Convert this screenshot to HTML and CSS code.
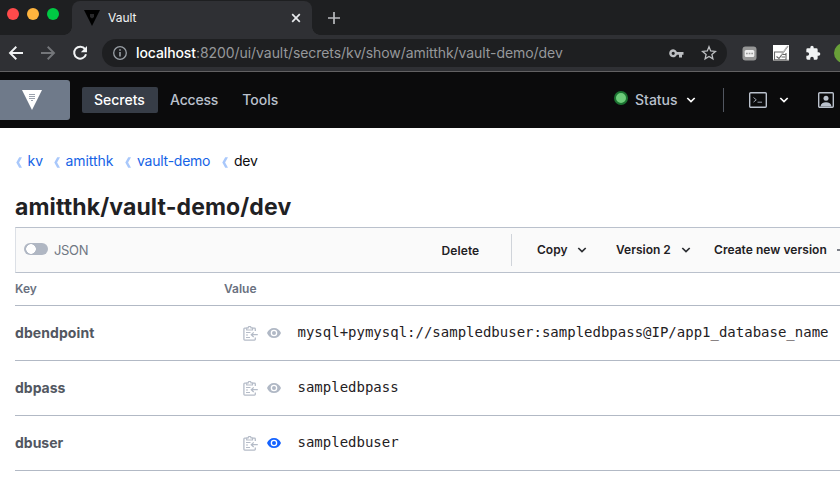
FILE: index.html
```html
<!DOCTYPE html>
<html lang="en">
<head>
<meta charset="utf-8">
<title>Vault</title>
<link rel="stylesheet" href="styles.css">
</head>
<body>
<svg class="defs" width="0" height="0">
  <symbol id="chev" viewBox="0 0 10 8"><path d="M1.300 2 5 5.600 8.700 2" fill="none" stroke="currentColor" stroke-width="1.7"/></symbol>
  <symbol id="crumb" viewBox="0 0 6 11"><path d="M3.200.3H6L3.100 5.500 6 10.700H3.200L.3 5.500Z" fill="currentColor"/></symbol>
  <symbol id="copy" viewBox="0 0 15 15"><g fill="none" stroke="currentColor"><path d="M10 2.200h1.500a.8.800 0 0 1 .8.800v2M3.200 2.200H1.700a.8.800 0 0 0-.8.800v10.300a.8.800 0 0 0 .8.800h9.800a.8.800 0 0 0 .8-.8V11.500" stroke-width="1.300"/><path d="M3.700 4V1.800h1.500a1.400 1.400 0 0 1 2.800 0h1.500V4Z" stroke-width="1.200"/><path d="M3 6.500h4.500M3 9h2M3 11.500h4" stroke-width="1.200"/><path d="M14.800 8.700H8.500M10.700 6.400 8.300 8.700l2.400 2.300" stroke-width="1.300"/></g></symbol>
  <symbol id="eye" viewBox="0 0 14 10"><path fill="currentColor" fill-rule="evenodd" d="M7 0C3.800 0 1.100 2 0 5c1.100 3 3.800 5 7 5s5.900-2 7-5c-1.100-3-3.800-5-7-5Zm0 8.300a3.300 3.300 0 1 1 0-6.600 3.300 3.300 0 0 1 0 6.600ZM7 3a2 2 0 1 0 0 4 2 2 0 0 0 0-4Z"/></symbol>
</svg>

<div class="tabstrip">
  <div class="lights"><i class="red"></i><i class="yellow"></i><i class="green"></i></div>
  <div class="tab">
    <svg class="favicon" width="16" height="16" viewBox="0 0 16 16"><path d="M0 0h16L8 16Z" fill="#000"/><path d="M6 4h4v3L8 8.500 6 7Z" fill="#29292b"/></svg>
    <span class="tab-title">Vault</span>
    <svg class="close" width="10" height="10" viewBox="0 0 10 10"><path d="m1.200 1.200 7.600 7.600m0-7.600L1.200 8.800" stroke="#e8eaed" stroke-width="1.700"/></svg>
  </div>
  <svg class="plus" width="12" height="12" viewBox="0 0 12 12"><path d="M6 0v12M0 6h12" stroke="#b9bbbe" stroke-width="1.700"/></svg>
</div>

<div class="addressbar">
  <svg class="back" width="16" height="16" viewBox="0 0 16 16"><path d="M15 8H2.500M8.300 1.800 2 8l6.300 6.200" fill="none" stroke="#f1f3f4" stroke-width="1.900"/></svg>
  <svg class="forward" width="16" height="16" viewBox="0 0 16 16"><path d="M1 8h12.500M7.700 1.800 14 8l-6.300 6.200" fill="none" stroke="#74767a" stroke-width="1.900"/></svg>
  <svg class="reload" width="16" height="16" viewBox="0 0 16 16"><path d="M13.100 4.200A6 6 0 1 0 14 9.200" fill="none" stroke="#f1f3f4" stroke-width="2"/><path d="M15 1v6.200H8.800Z" fill="#f1f3f4"/></svg>
  <div class="omnibox">
    <svg class="info" width="16" height="16" viewBox="0 0 16 16"><circle cx="8" cy="8" r="6.300" fill="none" stroke="#9aa0a6" stroke-width="1.300"/><path d="M8 7v4.500M8 4.300v1.500" stroke="#9aa0a6" stroke-width="1.600"/></svg>
    <span class="url"><b>localhost</b><span class="path">:8200/ui/vault/secrets/kv/show/amitthk/vault-demo/dev</span></span>
    <svg class="key" width="15" height="9" viewBox="0 0 15 9"><path fill="#bdbfc2" fill-rule="evenodd" d="M7.900 2.900A4 4 0 1 0 7.900 5.700H10V8.500h3V5.700h1.500V2.900ZM4.200 2.700a1.600 1.600 0 1 1 0 3.200 1.600 1.600 0 0 1 0-3.200Z"/></svg>
    <svg class="star" width="16" height="16" viewBox="0 0 16 16"><path d="m8 1.700 1.700 4.300 4.700.4-3.500 3 1 4.500L8 11.500l-3.900 2.400 1-4.500-3.500-3L6.300 6Z" fill="none" stroke="#bdbfc2" stroke-width="1.300"/></svg>
  </div>
  <svg class="ext-dots" width="15" height="15" viewBox="0 0 15 15"><rect x=".5" y=".5" width="14" height="14" rx="3" fill="#969696"/><rect x="2.700" y="4" width="9.600" height="7" rx="1.500" fill="#eee"/><path d="M4 7.500h1.700M6.700 7.500h1.700M9.300 7.500H11" stroke="#999" stroke-width="1.500"/></svg>
  <svg class="ext-note" width="16" height="16" viewBox="0 0 16 16"><path d="M0 0h16v16H0Z" fill="#fff"/><path d="M10 7H1.500v7.800h11.500V8M0 15.300h16M3.500 11.500 6 13.500 15 1M9.500 9.500h3M8.500 12H12" fill="none" stroke="#666" stroke-width="1.100"/><path d="m7 11 6-9 2.500-1.500-6 9Z" fill="#bbb"/></svg>
  <svg class="puzzle" width="16" height="16" viewBox="0 0 24 24"><path fill="#f1f3f4" d="M20.500 11H19V7a2 2 0 0 0-2-2h-4V3.500a2.500 2.500 0 0 0-5 0V5H4a2 2 0 0 0-2 2v3.800h1.500a2.700 2.700 0 0 1 0 5.400H2V20a2 2 0 0 0 2 2h3.800v-1.500a2.700 2.700 0 0 1 5.400 0V22H17a2 2 0 0 0 2-2v-4h1.500a2.500 2.500 0 0 0 0-5Z"/></svg>
  <i class="avatar"></i>
</div>

<header class="nav">
  <div class="brand"><svg width="20" height="20" viewBox="0 0 20 20"><path d="M0 0h20L10 20Z" fill="#fff"/><g fill="none" stroke="#6f7a8a"><path d="M7.300 4.500h5.500M7.300 6.500h5.500M7.300 8.500h5.500M9.300 10.500h2" stroke-width="1.100" stroke-dasharray="1.400 .6"/></g></svg></div>
  <nav><a class="item active">Secrets</a><a class="item access">Access</a><a class="item tools">Tools</a></nav>
  <div class="status"><i class="dot"></i><span class="t-status">Status</span><svg class="chev"><use href="#chev"/></svg></div>
  <i class="nav-rule"></i>
  <svg class="terminal" width="18" height="16" viewBox="0 0 18 16"><rect x=".7" y=".7" width="16.600" height="14.600" rx="1" fill="none" stroke="#bac1cc" stroke-width="1.400"/><path d="m4.500 5.500 2.800 2.300-2.800 2.300M8.500 10.200H13" fill="none" stroke="#9ba2ae" stroke-width="1"/></svg>
  <svg class="chev term-chev"><use href="#chev"/></svg>
  <svg class="user" width="16" height="16" viewBox="0 0 16 16"><rect x=".7" y=".7" width="14.600" height="14.600" rx="1" fill="none" stroke="#bac1cc" stroke-width="1.400"/><circle cx="8" cy="6.300" r="2.500" fill="#bac1cc"/><path d="M2.500 14.500c.3-3 2.600-4.200 5.500-4.200s5.200 1.200 5.500 4.200Z" fill="#bac1cc"/></svg>
</header>

<main>
  <div class="crumbs">
    <svg><use href="#crumb"/></svg><a class="c-kv">kv</a>
    <svg><use href="#crumb"/></svg><a class="c-user">amitthk</a>
    <svg><use href="#crumb"/></svg><a class="c-demo">vault-demo</a>
    <svg><use href="#crumb"/></svg><span class="c-dev">dev</span>
  </div>
  <h1>amitthk/vault-demo/dev</h1>
  <div class="toolbar">
    <i class="switch"></i><span class="json">JSON</span>
    <span class="delete">Delete</span><i class="tool-rule"></i>
    <span class="act copy-act">Copy</span><svg class="chev"><use href="#chev"/></svg>
    <span class="act version">Version 2</span><svg class="chev"><use href="#chev"/></svg>
    <span class="act create">Create new version</span><svg class="add" width="10" height="10" viewBox="0 0 10 10"><path d="M5 0v10M0 5h10" stroke="#525761" stroke-width="1.600"/></svg>
  </div>
  <div class="row head"><span class="col-key">Key</span><span>Value</span></div>
  <div class="row"><b class="name n1">dbendpoint</b><svg class="copy"><use href="#copy"/></svg><svg class="eye"><use href="#eye"/></svg><code>mysql+pymysql://sampledbuser:sampledbpass@IP/app1_database_name</code></div>
  <div class="row"><b class="name">dbpass</b><svg class="copy"><use href="#copy"/></svg><svg class="eye"><use href="#eye"/></svg><code>sampledbpass</code></div>
  <div class="row"><b class="name">dbuser</b><svg class="copy"><use href="#copy"/></svg><svg class="eye on"><use href="#eye"/></svg><code>sampledbuser</code></div>
</main>
</body>
</html>
```
FILE: styles.css
```css
* { box-sizing: border-box; }
body { margin: 0; width: 840px; height: 481px; overflow: hidden; background: #fff; color: #1f2124; font-family: Inter, "Liberation Sans", sans-serif; font-size: 14px; white-space: nowrap; }
svg { display: block; flex: none; }
i { display: block; flex: none; }
span, a, b { flex: none; }
.defs { display: none; }

.tabstrip { display: flex; height: 35px; background: #1e1f21; align-items: flex-start; }
.lights { display: flex; gap: 8px; padding: 8px 0 0 7px; width: 72px; }
.lights i { width: 12px; height: 12px; border-radius: 50%; }
.red { background: #ff4a4b; }
.yellow { background: #ffb43e; }
.green { background: #00c944; }
.tab { position: relative; display: flex; width: 240px; height: 34px; margin-top: 1px; padding: 0 11px 0 12px; border-radius: 8px 8px 0 0; background: #2f3034; align-items: center; }
.tab::before, .tab::after { content: ""; position: absolute; bottom: 0; width: 8px; height: 8px; }
.tab::before { left: -8px; background: radial-gradient(circle at 0 0, #1e1f21 7.5px, #2f3034 8px); }
.tab::after { right: -8px; background: radial-gradient(circle at 100% 0, #1e1f21 7.5px, #2f3034 8px); }
.tab-title { margin: -2px 0 0 8px; color: #f1f3f4; font-size: 12px; }
.close { margin-left: auto; }
.plus { margin: 12px 0 0 16px; }

.addressbar { display: flex; height: 37px; background: #2f3034; border-bottom: 1px solid #626163; align-items: center; overflow: hidden; }
.back { margin-left: 8px; }
.forward { margin-left: 16px; }
.reload { margin-left: 16px; }
.omnibox { display: flex; flex: none; width: 625px; height: 28px; margin-left: 14px; padding: 0 10px; border-radius: 14px; background: #1e1f21; align-items: center; }
.url { margin: -2px 0 0 8px; color: #96989b; font-size: 14px; letter-spacing: -.06px; }
.url b { color: #fff; font-weight: 500; letter-spacing: -.1px; }
.key { margin-left: auto; }
.star { margin-left: 17px; }
.ext-dots { margin-left: 15px; }
.ext-note { margin-left: 16px; }
.puzzle { margin-left: 16px; }
.avatar { width: 20px; height: 20px; margin-left: 13px; border-radius: 50%; background: #689f38; }

.nav { display: flex; height: 56px; background: #0b0b0c; color: #bac1cc; align-items: center; font-weight: 500; }
.brand { display: flex; width: 70px; height: 40px; padding-left: 22px; border-radius: 0 3px 3px 0; background: #6f7a8a; align-items: center; }
nav { display: flex; width: 532px; padding-left: 12px; align-items: center; }
.item { margin-left: 12px; line-height: 16px; padding-bottom: 1px; }
.active { width: 76px; height: 26px; margin: 0; padding-left: 12px; border-radius: 2px; background: #373d47; color: #fff; line-height: 26px; }
.access { letter-spacing: -.18px; }
.tools { margin-left: 24px; }
.status { display: flex; width: 121px; padding-left: 12px; align-items: center; }
.t-status { width: 43px; margin-top: -2px; }
.dot { width: 14px; height: 14px; margin: -4px 7px 0 0; border: 2px solid #1b7331; border-radius: 50%; background: #6dcc7a; }
.chev { width: 10px; height: 8px; color: #fff; }
.status .chev { margin-left: 8px; }
.nav-rule { width: 1px; height: 24px; background: #525761; }
.terminal { margin-left: 25px; }
.term-chev { margin-left: 12px; }
.user { margin-left: 29px; }

main { padding-left: 15px; }
.crumbs { display: flex; height: 65px; align-items: center; color: #1563e6; letter-spacing: -.05px; }
.crumbs svg { width: 6px; height: 11px; margin: 3px 6px 0 .5px; color: #a9c8fb; }
.crumbs .c-dev { color: #0b0b0c; }
.c-kv { width: 25.500px; }
.c-user { width: 59px; }
.c-demo { width: 84.500px; letter-spacing: -.24px; }
.c-dev { letter-spacing: -.25px; }
h1 { height: 34px; margin: 0; font-size: 23px; line-height: 28px; font-weight: 700; letter-spacing: .12px; }
.toolbar { display: flex; height: 46px; border: 1px solid #bac1cc; border-left-color: #dce0e6; border-right: 0; background: #fafafa; align-items: center; color: #1f2124; font-size: 12px; font-weight: 600; overflow: hidden; }
.switch { width: 24px; height: 12px; margin: -2px 6px 0 8px; border-radius: 6px; background: radial-gradient(circle at 7px 6px, #fff 4.500px, #b0b7c3 5px); }
.json { width: 387.500px; color: #6f7682; font-size: 13px; font-weight: 400; letter-spacing: -.35px; }
.delete { width: 69.500px; letter-spacing: .1px; }
.tool-rule { width: 1px; height: 32px; background: #d0d4da; }
.toolbar .chev { color: #2b2d31; }
.act { margin-top: -1px; }
.copy-act { width: 40px; margin-left: 25px; }
.version { width: 65px; margin-left: 29px; }
.create { width: 123px; margin-left: 23px; letter-spacing: .04px; }
.row { display: flex; height: 55px; border-bottom: 1px solid #b2b9c5; align-items: center; }
.head { height: 33px; padding-bottom: 2px; color: #6a7180; font-size: 12px; font-weight: 600; }
.col-key { width: 209px; }
.name { width: 228px; margin-top: -2px; color: #525761; font-weight: 700; }
.n1 { letter-spacing: .08px; }
.copy { width: 15px; height: 15px; color: #b5bcc8; }
.eye { width: 14px; height: 10px; margin-left: 9px; color: #b0b8c5; }
.on { color: #1563ff; }
code { margin: -2px 0 0 16.500px; font: 14px "DejaVu Sans Mono", monospace; color: #1f2124; }
```
